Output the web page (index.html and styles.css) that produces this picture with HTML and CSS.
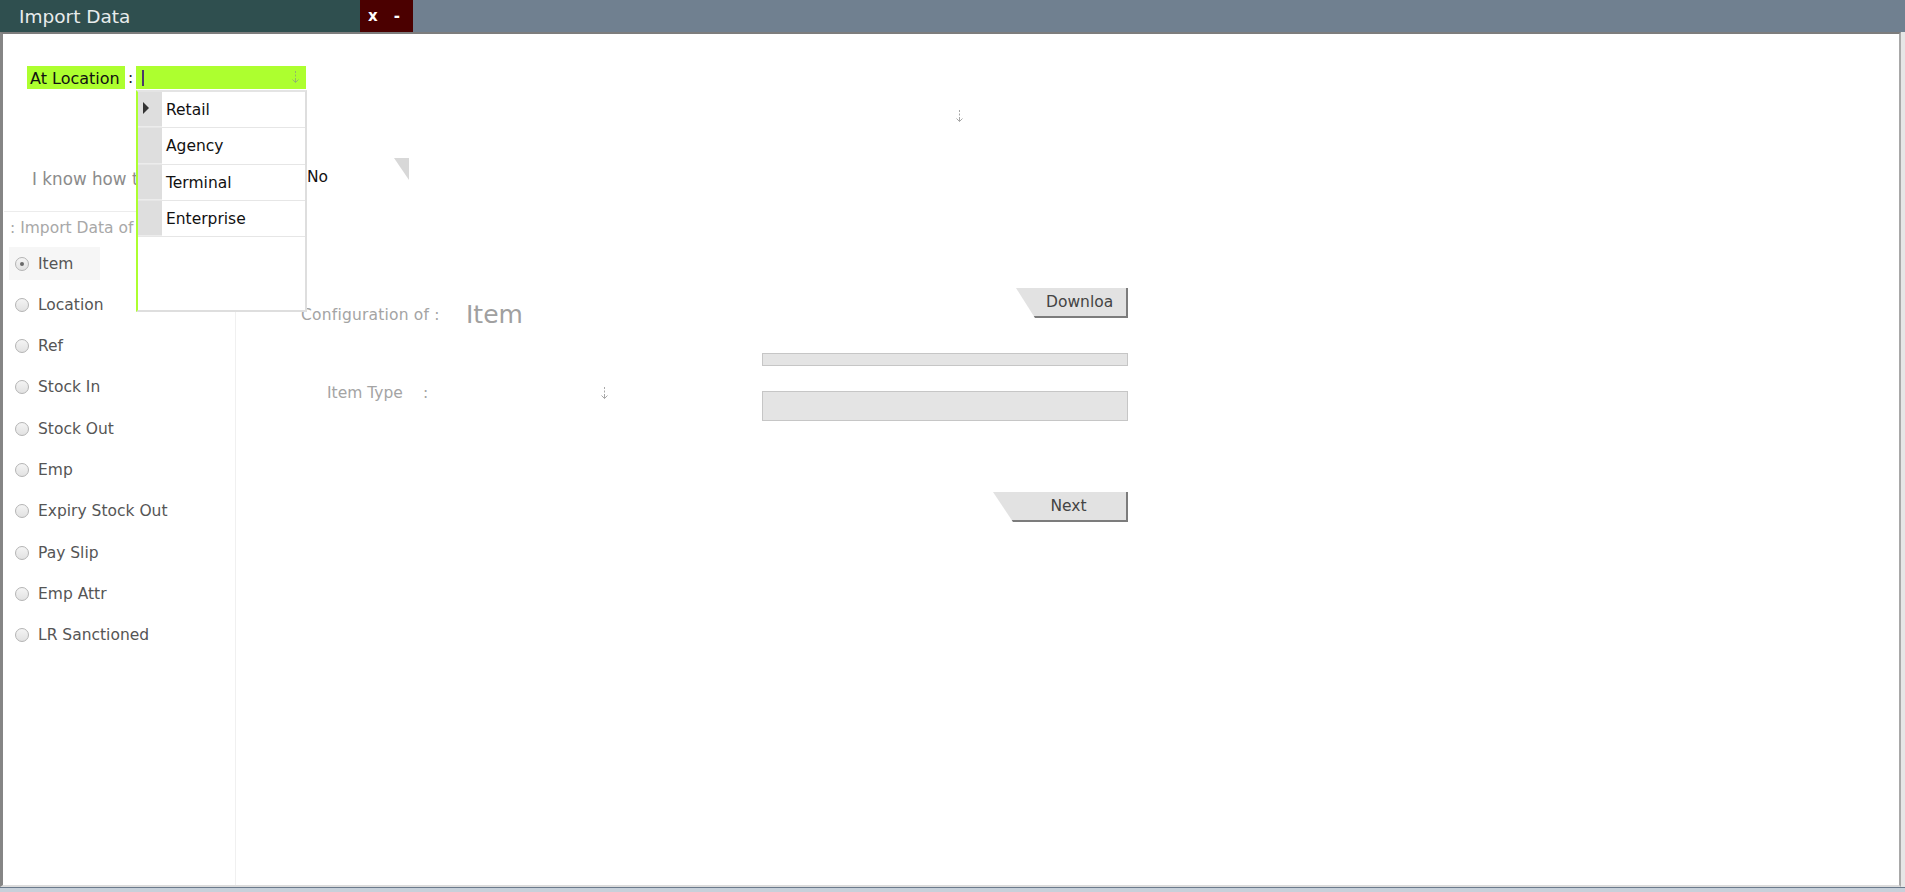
FILE: index.html
```html
<!DOCTYPE html>
<html lang="en">
<head>
<meta charset="utf-8">
<title>Import Data</title>
<link rel="stylesheet" href="styles.css">
</head>
<body>
<div class="titlebar">
  <div class="title">Import Data</div>
  <div class="winctrl"><span class="close">x</span><span class="min">-</span></div>
  <div class="titlefill"></div>
</div>
<div class="screen">
  <div class="window">
    <div class="top">
      <div class="loc-row">
        <span class="loc-label">At Location</span>
        <span class="colon">:</span>
        <div class="combo">
          <span class="caret"></span>
          <svg class="darrow" width="9" height="13" viewBox="0 0 9 13"><path d="M4.5 0v2M4.5 3.5v2M4.5 7v4.5" stroke="currentColor" stroke-width="1" fill="none"/><path d="M1.5 8.5l3 3 3-3" stroke="currentColor" stroke-width="1" fill="none"/></svg>
          <div class="dropdown">
            <div class="dd-row"><span class="dd-head"><span class="ptr"></span></span><span class="dd-cell">Retail</span></div>
            <div class="dd-row"><span class="dd-head"></span><span class="dd-cell">Agency</span></div>
            <div class="dd-row"><span class="dd-head"></span><span class="dd-cell">Terminal</span></div>
            <div class="dd-row"><span class="dd-head"></span><span class="dd-cell">Enterprise</span></div>
          </div>
        </div>
      </div>
      <div class="arrow-row">
        <svg class="darrow" width="9" height="13" viewBox="0 0 9 13"><path d="M4.5 0v2M4.5 3.5v2M4.5 7v4.5" stroke="currentColor" stroke-width="1" fill="none"/><path d="M1.5 8.5l3 3 3-3" stroke="currentColor" stroke-width="1" fill="none"/></svg>
      </div>
      <div class="know-row">
        <span class="know">I know how t</span>
        <span class="no">No</span>
        <span class="tri"></span>
      </div>
    </div>
    <div class="body">
      <aside class="side">
        <div class="side-head">: Import Data of</div>
        <ul class="radios">
          <li class="radio selected"><span class="dot"></span>Item</li>
          <li class="radio"><span class="dot"></span>Location</li>
          <li class="radio"><span class="dot"></span>Ref</li>
          <li class="radio"><span class="dot"></span>Stock In</li>
          <li class="radio"><span class="dot"></span>Stock Out</li>
          <li class="radio"><span class="dot"></span>Emp</li>
          <li class="radio"><span class="dot"></span>Expiry Stock Out</li>
          <li class="radio"><span class="dot"></span>Pay Slip</li>
          <li class="radio"><span class="dot"></span>Emp Attr</li>
          <li class="radio"><span class="dot"></span>LR Sanctioned</li>
        </ul>
      </aside>
      <main class="main">
        <div class="form">
          <div class="row-a">
            <div class="config">
              <span class="config-label">Configuration of :</span>
              <span class="config-value">Item</span>
            </div>
            <div class="btn btn-download">Downloa</div>
          </div>
          <div class="row-b">
            <div class="type-row">
              <span class="type-label">Item Type</span>
              <span class="type-colon">:</span>
              <svg class="darrow type-arrow" width="9" height="13" viewBox="0 0 9 13"><path d="M4.5 0v2M4.5 3.5v2M4.5 7v4.5" stroke="currentColor" stroke-width="1" fill="none"/><path d="M1.5 8.5l3 3 3-3" stroke="currentColor" stroke-width="1" fill="none"/></svg>
            </div>
            <div class="bars">
              <div class="bar thin"></div>
              <div class="bar thick"></div>
            </div>
          </div>
          <div class="row-c">
            <div class="btn btn-next">Next</div>
          </div>
        </div>
      </main>
    </div>
  </div>
  <div class="rightstrip"></div>
</div>
<div class="taskbar"></div>
</body>
</html>
```
FILE: styles.css
```css
* { box-sizing: border-box; }
html, body { margin: 0; padding: 0; }
body {
  width: 1905px;
  height: 892px;
  overflow: hidden;
  background: #e4e4e4;
  font-family: "DejaVu Sans", "Liberation Sans", sans-serif;
  font-size: 15.5px;
  color: #555;
}

.titlebar { display: flex; height: 32px; }
.title {
  width: 360px;
  background: #2f4f4f;
  color: #e8ecec;
  font-size: 18.5px;
  line-height: 33px;
  padding-left: 19px;
}
.winctrl {
  width: 53px;
  background: #4b0000;
  color: #fff;
  display: flex;
  align-items: center;
  padding-left: 8px;
  font-weight: bold;
  font-size: 15px;
}
.winctrl .min { margin-left: 16px; font-weight: bold; }
.titlefill { flex: 1; background: #708090; }

.screen { display: flex; height: 855px; }
.window {
  width: 1901px;
  height: 855px;
  background: #fff;
  border-top: 2px solid #7d7d7d;
  border-left: 3px solid #858585;
  border-right: 2px solid #a8a8a8;
  border-bottom: 2px solid #dcdcdc;
  display: flex;
  flex-direction: column;
}
.rightstrip { flex: 1; background: #e6e6e6; }
.taskbar { height: 5px; background: #c7d0da; border-top: 1px solid #6b7a8c; }

/* top section */
.top { height: 177px; position: relative; z-index: 2; }
.loc-row { display: flex; align-items: stretch; height: 23px; margin-top: 32px; padding-left: 24px; }
.loc-label {
  background: #adff2f;
  color: #111;
  width: 98px;
  font-size: 16px;
  line-height: 25px;
  padding-left: 3px;
  white-space: nowrap;
}
.colon { width: 11px; text-align: center; line-height: 25px; color: #222; }
.combo {
  position: relative;
  width: 170px;
  background: #adff2f;
  display: flex;
  align-items: center;
  justify-content: space-between;
  padding: 0 6px 0 6px;
}
.caret { width: 2px; height: 16px; background: #4a3a6a; }
.darrow { display: block; color: #a8a8a8; }
.combo .darrow { color: #93b86a; }

.dropdown {
  position: absolute;
  left: 0;
  top: 24px;
  width: 171px;
  height: 222px;
  background: #fff;
  border-left: 2px solid #adff2f;
  border-right: 2px solid #dedede;
  border-bottom: 2px solid #dedede;
  border-top: 2px solid #e4e4e4;
}
.dd-row { display: flex; height: 36.3px; border-bottom: 1px solid #e6e6e6; }
.dd-head {
  width: 24px;
  background: #dedede;
  border-bottom: 1px solid #ececec;
  display: flex;
  align-items: center;
  padding-left: 5px;
}
.ptr {
  width: 0; height: 0;
  border-left: 6px solid #333;
  border-top: 6px solid transparent;
  border-bottom: 6px solid transparent;
  margin-top: -2px;
}
.dd-cell { flex: 1; color: #111; line-height: 37px; padding-left: 4px; }

.arrow-row { height: 36px; padding-left: 952px; padding-top: 21px; }
.know-row { display: flex; align-items: flex-start; margin-top: 33px; padding-left: 29px; }
.know { width: 275px; color: #8c8c8c; margin-top: 11px; line-height: 20px; font-size: 16.8px; }
.no { width: 87px; color: #111; margin-top: 10px; line-height: 18px; }
.tri {
  width: 15px; height: 22px;
  background: #d8d8d8;
  clip-path: polygon(0 0, 100% 0, 100% 100%);
}

/* body */
.body { flex: 1; display: grid; grid-template-columns: 233px 1fr; }
.side { border-top: 1px solid #ececec; border-right: 1px solid #f0f0f0; margin-left: 1px; }
.side-head { color: #a8a8a8; margin-top: 7px; padding-left: 6px; line-height: 18px; white-space: nowrap; }
.radios { list-style: none; margin: 10px 0 0 5px; padding: 0; display: flex; flex-direction: column; gap: 8.3px; }
.radio {
  display: flex;
  align-items: center;
  height: 33px;
  padding-left: 6px;
  gap: 9px;
  width: max-content;
  color: #555;
}
.radio.selected { background: #f6f6f6; width: 91px; }
.dot {
  width: 14px; height: 14px;
  border-radius: 50%;
  border: 1px solid #b4b4b4;
  background: linear-gradient(#f4f4f4, #e2e2e2);
  position: relative;
}
.radio.selected .dot::after {
  content: "";
  position: absolute;
  left: 4px; top: 4px;
  width: 4px; height: 4px;
  border-radius: 50%;
  background: #6a6a6a;
}

.main { padding-left: 65px; }
.form { width: 827px; }
.row-a { display: flex; justify-content: space-between; align-items: flex-start; height: 30px; margin-top: 77px; }
.config { display: flex; align-items: flex-end; margin-top: 14px; }
.config-label { width: 165px; color: #a4a4a4; letter-spacing: 0.2px; line-height: 20px; padding-bottom: 3px; }
.config-value { font-size: 25px; color: #a0a0a0; line-height: 26px; }

.btn {
  background: #e2e2e2;
  border-right: 2px solid #7c7c7c;
  border-bottom: 2px solid #7c7c7c;
  height: 30px;
  line-height: 28px;
  color: #444;
  white-space: nowrap;
  overflow: hidden;
}
.btn-download {
  width: 112px;
  padding-left: 30px;
  clip-path: polygon(0 0, 100% 0, 100% 100%, 19px 100%);
}
.btn-next {
  width: 135px;
  text-align: center;
  padding-left: 18px;
  clip-path: polygon(0 0, 100% 0, 100% 100%, 20px 100%);
}

.row-b { display: grid; grid-template-columns: 461px 366px; margin-top: 35px; }
.type-row { display: flex; align-items: center; padding-left: 26px; margin-top: 31px; height: 18px; }
.type-label { width: 96px; color: #a4a4a4; }
.type-colon { color: #a4a4a4; }
.type-arrow { margin-left: 172px; }
.bars { display: flex; flex-direction: column; gap: 25px; }
.bar { background: #e4e4e4; border: 1px solid #c6c6c6; }
.bar.thin { height: 13px; }
.bar.thick { height: 30px; }
.row-c { display: flex; justify-content: flex-end; margin-top: 71px; }
```
